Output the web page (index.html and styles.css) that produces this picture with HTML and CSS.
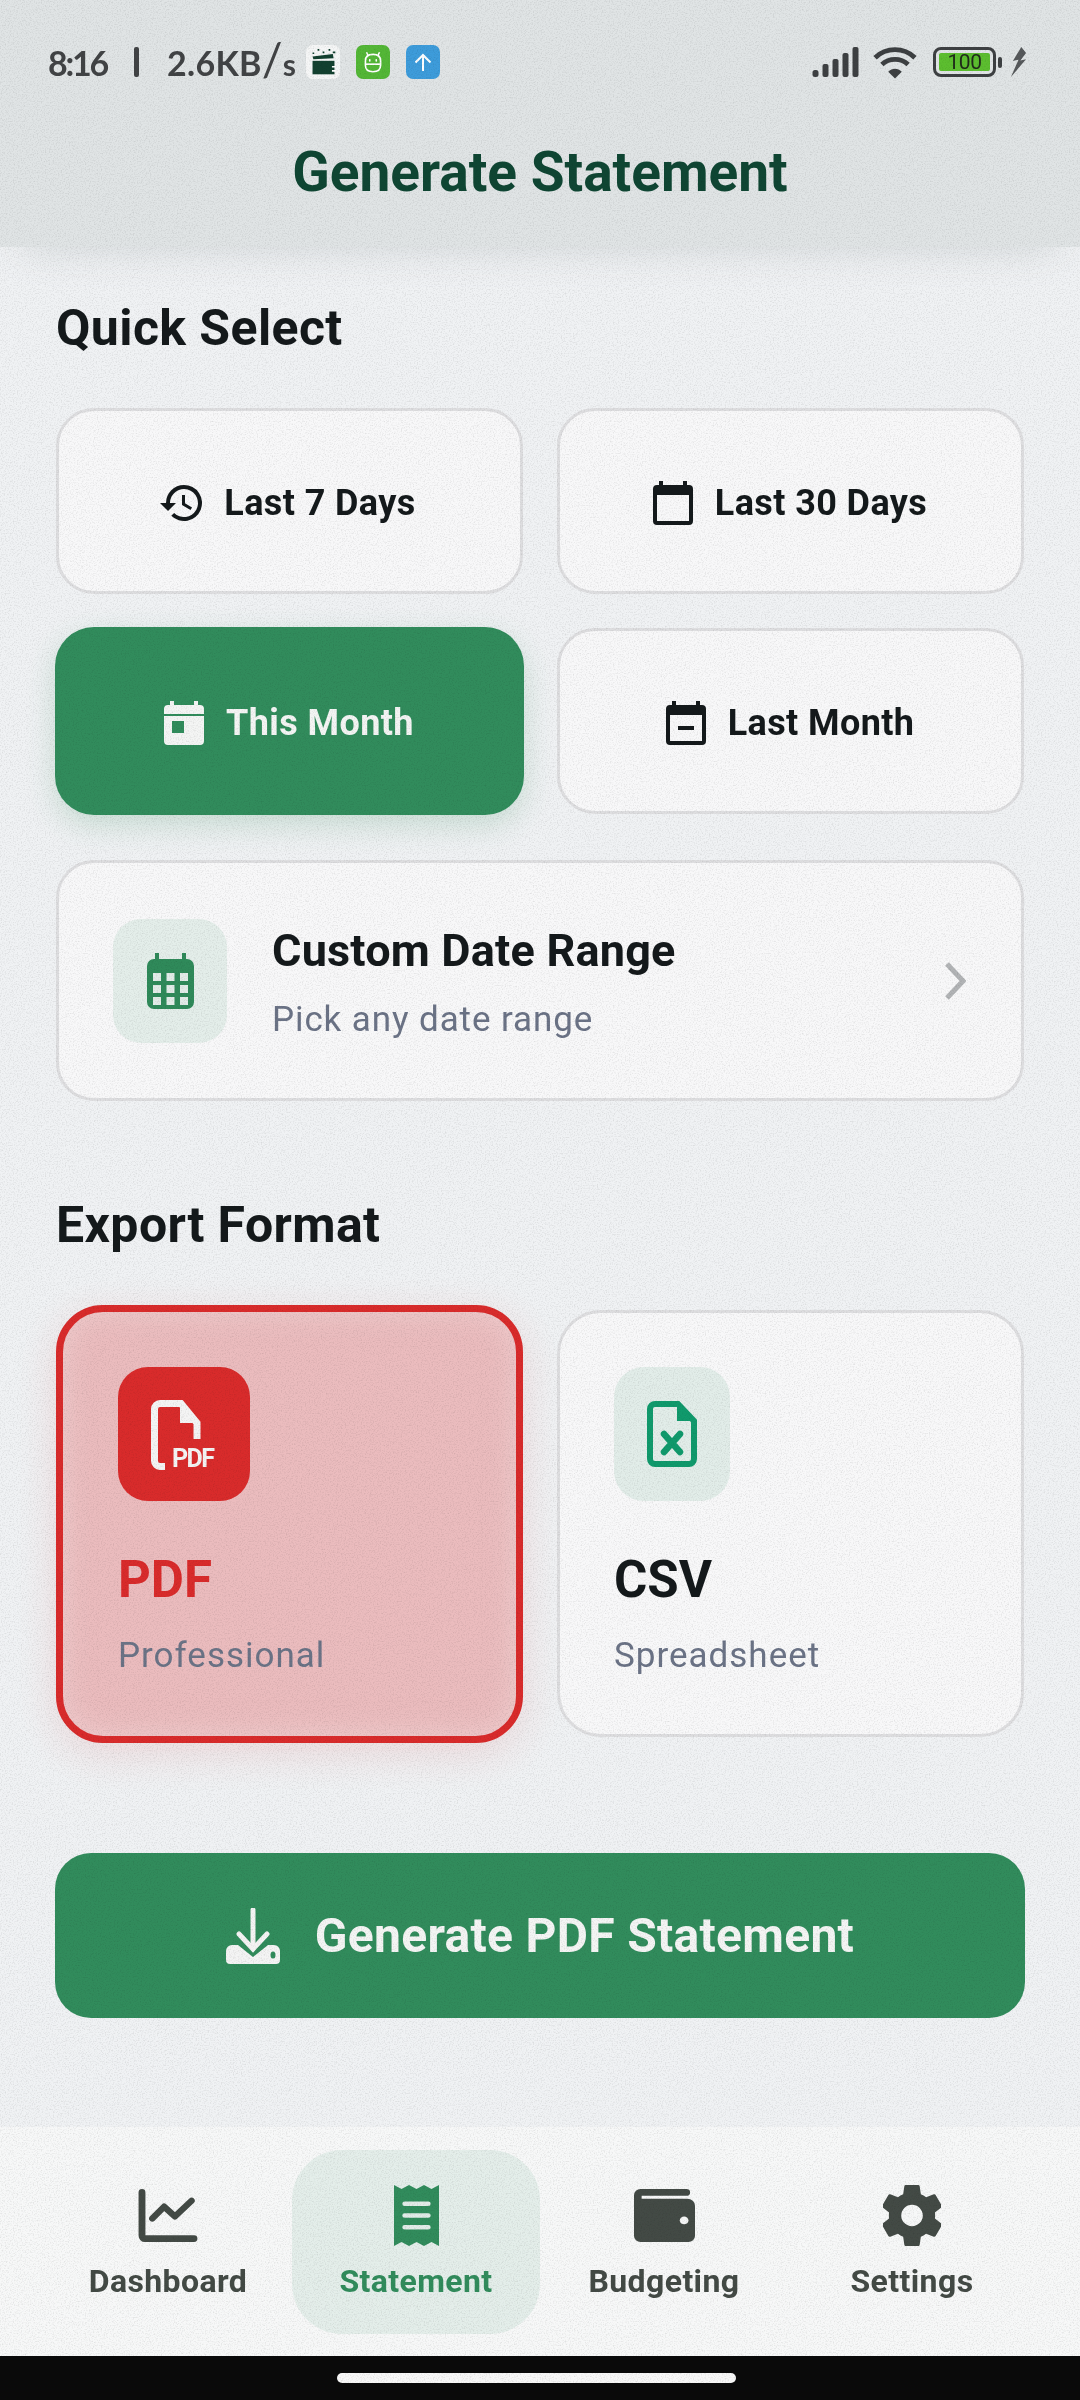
FILE: index.html
```html
<!DOCTYPE html>
<html lang="en">
<head>
    <meta charset="UTF-8">
    <meta name="viewport" content="width=device-width, initial-scale=1.0">
    <title>Generate Statement</title>
    <link rel="stylesheet" href="styles.css">
</head>
<body>
    <div class="screen">
        <header class="top">
            <div class="status">
                <div class="status-left">
                    <span class="clock">8:16</span>
                    <span class="sep"></span>
                    <span class="speed">2.6KB<i class="slash">/</i><small>s</small></span>
                    <span class="app app-white">
                        <svg viewBox="0 0 32 34" width="27" height="29"><path d="M3 5h2v2H3zM9 1h2v2H9zM15 4h2v2h-2zM22 1h2v2h-2zM27 4h3v2h-3z" fill="#12402f"/><path d="M3 10l24-3 1 5-24 1z" fill="#12402f"/><path d="M3 15h26v16H3z" fill="#12402f"/><path d="M26 21h4v2h-4zM26 26h4v2h-4z" fill="#fff"/></svg>
                    </span>
                    <span class="app app-green">
                        <svg viewBox="0 0 24 24" width="26" height="26" fill="none" stroke="#fff" stroke-width="1.5"><path d="M6 3l1.5 3M18 3l-1.500 3"/><path d="M5 11c0-4 3-6 7-6s7 2 7 6v4c0 4-3 6-7 6s-7-2-7-6z"/><path d="M5 14h14"/><path d="M9 10v1M15 10v1" stroke-linecap="round"/></svg>
                    </span>
                    <span class="app app-blue">
                        <svg viewBox="0 0 24 24" width="24" height="24" fill="none" stroke="#fff" stroke-width="2"><path d="M12 21V5M4.5 12.5L12 5l7.5 7.5"/></svg>
                    </span>
                </div>
                <div class="status-right">
                    <svg class="signal" viewBox="0 0 46 32" width="47" height="32" fill="#3d4042">
                        <rect x="0" y="24" width="6" height="7" rx="2.5"/>
                        <rect x="10" y="18" width="6" height="13" rx="2"/>
                        <rect x="20" y="13" width="6" height="18" rx="2"/>
                        <rect x="30" y="7" width="6" height="24" rx="2"/>
                        <rect x="40" y="1" width="6" height="30" rx="2"/>
                    </svg>
                    <svg class="wifi" viewBox="0 0 46 36" width="46" height="35" fill="none" stroke="#3d4042" stroke-width="5">
                        <path d="M2.500 13C14 2 32 2 43.500 13"/>
                        <path d="M9.500 20C17 13 29 13 36.500 20"/>
                        <path d="M23 34.500L16 27.500C20 23.500 26 23.500 30 27.500z" fill="#3d4042" stroke="none"/>
                    </svg>
                    <div class="battery">
                        <div class="battery-body"><span class="battery-level">100</span></div>
                        <span class="battery-tip"></span>
                    </div>
                    <svg class="bolt" viewBox="0 0 18 32" width="17" height="32" fill="#56595b"><path d="M12 0L3 15l6-1.500L1 32 17 13l-6 1.500 6-8z"/></svg>
                </div>
            </div>
            <h1 class="title">Generate Statement</h1>
        </header>

        <main class="content">
            <h2 class="section-title">Quick Select</h2>
            <div class="quick-grid">
                <button class="quick">
                    <svg class="quick-icon" viewBox="0 0 24 24"><path d="M13 3a9 9 0 0 0-9 9H1l3.900 3.900.1.100L9 12H6a7 7 0 1 1 2.050 4.950L6.640 18.360A9 9 0 1 0 13 3zm-1 5v5l4.250 2.520.77-1.280-3.520-2.090V8z"/></svg>
                    Last 7 Days
                </button>
                <button class="quick">
                    <svg class="quick-icon" viewBox="0 0 24 24"><path d="M20 3h-1V1h-2v2H7V1H5v2H4a2 2 0 0 0-2 2v16a2 2 0 0 0 2 2h16a2 2 0 0 0 2-2V5a2 2 0 0 0-2-2zm0 18H4V8h16z"/></svg>
                    Last 30 Days
                </button>
                <button class="quick quick-on">
                    <svg class="quick-icon" viewBox="0 0 24 24"><path d="M20 3h-1V1h-2v2H7V1H5v2H4a2 2 0 0 0-2 2v16a2 2 0 0 0 2 2h16a2 2 0 0 0 2-2V5a2 2 0 0 0-2-2z"/><path d="M2 7.500h20v1H2zM6 11h6v6H6z" fill="#318c5c"/></svg>
                    This Month
                </button>
                <button class="quick">
                    <svg class="quick-icon" viewBox="0 0 24 24"><path d="M20 3h-1V1h-2v2H7V1H5v2H4a2 2 0 0 0-2 2v16a2 2 0 0 0 2 2h16a2 2 0 0 0 2-2V5a2 2 0 0 0-2-2zm0 18H4V8h16zM8 13.500h8v2H8z"/></svg>
                    Last Month
                </button>
            </div>

            <div class="custom">
                <div class="custom-icon">
                    <svg viewBox="0 0 47 56" width="47" height="56" fill="#2f8a5a">
                        <path d="M8 0h4v6h23V0h4v6h1a7 7 0 0 1 7 7v36a7 7 0 0 1-7 7H7a7 7 0 0 1-7-7V13a7 7 0 0 1 7-7h1z"/>
                        <path d="M6 20h8v8H6zM19.500 20h8v8h-8zM33 20h8v8h-8zM6 32h8v8H6zM19.500 32h8v8h-8zM33 32h8v8h-8zM6 44h8v8H6zM19.500 44h8v8h-8zM33 44h8v8h-8z" fill="#e2ece8"/>
                    </svg>
                </div>
                <div class="custom-text">
                    <div class="custom-name">Custom Date Range</div>
                    <div class="custom-sub">Pick any date range</div>
                </div>
                <svg class="chev" viewBox="0 0 22 38" width="22" height="38" fill="none" stroke="#b2b4b6" stroke-width="5"><path d="M3 2l16 17L3 36"/></svg>
            </div>

            <h2 class="section-title export-title">Export Format</h2>
            <div class="format-grid">
                <div class="format format-on">
                    <div class="format-icon icon-red">
                        <svg class="pdf-svg" viewBox="0 0 72 78" width="72" height="78" fill="none" stroke="#f4f4f4" stroke-width="7">
                            <path d="M46 39V23L30 3.500H9A5.500 5.500 0 0 0 3.500 9v52A5.500 5.500 0 0 0 9 66.500h5"/>
                            <path d="M29 2l19 21H29z" fill="#f4f4f4" stroke="none"/>
                            <text class="pdf-mini" x="21" y="67" textLength="43" lengthAdjust="spacing">PDF</text>
                        </svg>
                    </div>
                    <div class="format-name name-red">PDF</div>
                    <div class="format-sub">Professional</div>
                </div>
                <div class="format">
                    <div class="format-icon icon-mint">
                        <svg viewBox="0 0 50 66" width="50" height="66">
                            <path d="M3 8a5 5 0 0 1 5-5h23l16 17v38a5 5 0 0 1-5 5H8a5 5 0 0 1-5-5z" fill="none" stroke="#109a6c" stroke-width="6"/>
                            <path d="M30 2l17 18H30z" fill="#109a6c"/>
                            <path d="M17 33l16 18M33 33L17 51" stroke="#109a6c" stroke-width="6.500" stroke-linecap="round"/>
                        </svg>
                    </div>
                    <div class="format-name">CSV</div>
                    <div class="format-sub">Spreadsheet</div>
                </div>
            </div>

            <button class="generate">
                <svg viewBox="0 0 54 56" width="54" height="56" fill="#f4f4f4">
                    <path d="M27 2v38" stroke="#f4f4f4" stroke-width="5" stroke-linecap="round"/>
                    <path d="M13 26l14 15 14-15" fill="none" stroke="#f4f4f4" stroke-width="5" stroke-linecap="round"/>
                    <path d="M6 37h6l15 12 15-12h6a6 6 0 0 1 6 6v9a4 4 0 0 1-4 4H4a4 4 0 0 1-4-4v-9a6 6 0 0 1 6-6z"/>
                    <ellipse cx="47" cy="47" rx="2.500" ry="3.500" fill="#318c5c"/>
                </svg>
                Generate PDF Statement
            </button>
        </main>

        <nav class="tabs">
            <div class="tab">
                <div class="tab-icon">
                    <svg viewBox="0 0 60 54" width="60" height="53" fill="none" stroke="#434a45" stroke-width="7" stroke-linecap="round" stroke-linejoin="round"><path d="M3.500 3.500v44a3 3 0 0 0 3 3h50"/><path d="M14 30l12-12 11 10 17-16" stroke-width="6.500"/></svg>
                </div>
                <span>Dashboard</span>
            </div>
            <div class="tab tab-on">
                <div class="tab-icon">
                    <svg viewBox="0 0 42 60" width="45" height="61" preserveAspectRatio="none"><path d="M0 0l7 4 7-4 7 4 7-4 7 4 7-4v60l-7-4-7 4-7-4-7 4-7-4-7 4z" fill="#318c5c"/><path d="M10 18.500h22M10 30h22M10 41.500h22" stroke="#e2ece8" stroke-width="4.500" stroke-linecap="round"/></svg>
                </div>
                <span>Statement</span>
            </div>
            <div class="tab">
                <div class="tab-icon">
                    <svg viewBox="0 0 56 54" width="61" height="53" preserveAspectRatio="none"><path d="M6 0h42a3.500 3.500 0 0 1 0 7H7v3h42a7 7 0 0 1 7 7v31a6 6 0 0 1-6 6H6a6 6 0 0 1-6-6V6a6 6 0 0 1 6-6z" fill="#434a45"/><circle cx="46" cy="32" r="4" fill="#f4f5f5"/></svg>
                </div>
                <span>Budgeting</span>
            </div>
            <div class="tab">
                <div class="tab-icon">
                    <svg viewBox="2.600 2 18.800 20" width="58" height="61" preserveAspectRatio="none" fill="#434a45"><path d="M19.430 12.980c.04-.320.070-.650.070-.980s-.030-.660-.070-.980l2.110-1.650a.5.500 0 0 0 .120-.640l-2-3.460a.5.500 0 0 0-.610-.220l-2.490 1a7.300 7.300 0 0 0-1.690-.980l-.380-2.650A.49.490 0 0 0 14 2h-4a.49.490 0 0 0-.490.420l-.380 2.650c-.610.250-1.170.590-1.690.980l-2.490-1a.5.500 0 0 0-.610.220l-2 3.460a.49.490 0 0 0 .120.640l2.110 1.650c-.040.320-.070.650-.070.980s.030.660.070.980l-2.110 1.650a.5.500 0 0 0-.120.640l2 3.460c.120.220.390.300.610.220l2.490-1c.520.400 1.080.730 1.690.980l.380 2.650c.030.240.240.420.490.420h4c.250 0 .460-.180.490-.420l.380-2.650c.610-.250 1.170-.590 1.690-.980l2.490 1c.230.090.490 0 .610-.220l2-3.460a.5.500 0 0 0-.120-.640zM12 15.500a3.500 3.500 0 1 1 0-7 3.500 3.500 0 0 1 0 7z"/></svg>
                </div>
                <span>Settings</span>
            </div>
        </nav>

        <div class="navbar"><span class="home-pill"></span></div>
    </div>

    <!-- film grain over the whole shot -->
    <svg class="grain" width="1080" height="2400">
        <filter id="noise" x="0" y="0" width="100%" height="100%" color-interpolation-filters="sRGB">
            <feTurbulence type="fractalNoise" baseFrequency="0.75" numOctaves="2"/>
            <feColorMatrix type="matrix" values="0.22 0 0 0 0.88  0.22 0 0 0 0.88  0.22 0 0 0 0.88  0 0 0 0 1"/>
        </filter>
        <rect width="1080" height="2400" filter="url(#noise)"/>
    </svg>
</body>
</html>
```

FILE: styles.css
```css
* {
    box-sizing: border-box;
}
html, body {
    margin: 0;
    padding: 0;
}
body {
    width: 1080px;
    height: 2400px;
    overflow: hidden;
    font-family: Roboto, "Noto Sans", sans-serif;
    background-color: #f0f2f4;
    color: #14191b;
}
.screen {
    display: flex;
    flex-direction: column;
    height: 2400px;
}
.grain {
    position: absolute;
    left: 0;
    top: 0;
    mix-blend-mode: multiply;
    pointer-events: none;
}

/* header + status bar */
.top {
    position: relative;
    height: 247px;
    background-color: #e0e4e5;
    flex: none;
    box-shadow: 0 24px 38px -24px rgb(208, 213, 215);
}
.status {
    display: flex;
    justify-content: space-between;
    align-items: center;
    height: 93px;
    padding: 31px 53px 0 48px;
}
.status-left, .status-right {
    display: flex;
    align-items: center;
}
.clock, .speed {
    font-family: "Lato", sans-serif;
    font-size: 34px;
    font-weight: 700;
    color: #414345;
}
.clock {
    width: 60px;
    letter-spacing: -2.2px;
    white-space: nowrap;
}
.sep {
    width: 5px;
    height: 30px;
    background-color: #414345;
    border-radius: 2px;
    margin: 0 28px 0 26px;
}
.speed {
    width: 129px;
    white-space: nowrap;
    letter-spacing: 0.3px;
}
.slash {
    font-style: normal;
    font-size: 46px;
    line-height: 0;
    font-weight: 400;
}
.speed small {
    font-size: 30px;
}
.app {
    display: flex;
    align-items: center;
    justify-content: center;
    width: 34px;
    height: 34px;
    border-radius: 7px;
    margin-right: 16px;
}
.app-white {
    margin-left: 10px;
    background-color: #f5f6f6;
}
.app-green {
    background-color: #53b736;
}
.app-blue {
    background-color: #3d9cdb;
    margin-right: 0;
}
.signal {
    margin-right: 13px;
}
.wifi {
    margin-right: 15px;
}
.battery {
    display: flex;
    align-items: center;
    margin-right: 8px;
}
.battery-body {
    width: 63px;
    height: 30px;
    border: 3px solid #3d4042;
    border-radius: 8px;
    padding: 3px;
}
.battery-level {
    display: block;
    height: 18px;
    background-color: #5cbe2f;
    border-radius: 2px;
    font-size: 21px;
    line-height: 18px;
    letter-spacing: -0.5px;
    text-align: center;
    color: #1f2a1a;
}
.battery-tip {
    width: 4px;
    height: 11px;
    margin-left: 2px;
    background-color: #3d4042;
    border-radius: 2px;
}
.title {
    margin: 48px 0 0;
    text-align: center;
    font-size: 55px;
    line-height: 62px;
    font-weight: 700;
    color: #0f4633;
}

/* main */
.content {
    flex: 1;
    padding: 0 56px;
}
.section-title {
    margin: 0;
    font-size: 50px;
    line-height: 56px;
    font-weight: 700;
    letter-spacing: 0.4px;
    padding-top: 53px;
    height: 161px;
}
.export-title {
    height: 209px;
    padding-top: 96px;
}
.quick-grid {
    display: grid;
    grid-template-columns: 467px 467px;
    grid-auto-rows: 186px;
    gap: 34px;
}
.quick {
    display: flex;
    align-items: center;
    justify-content: center;
    gap: 18px;
    padding: 3px 5px 0 0;
    font-family: inherit;
    font-size: 36px;
    font-weight: 700;
    letter-spacing: 0.4px;
    color: #14191b;
    background-color: #f8f8f9;
    border: 3px solid #dedee0;
    border-radius: 38px;
}
.quick-icon {
    width: 48px;
    height: 48px;
    fill: currentColor;
    flex: none;
}
.quick-on {
    background-color: #318c5c;
    border-color: #318c5c;
    color: #f4f5f4;
    box-shadow: 0 0 0 1px #318c5c, 0 10px 30px rgba(49, 140, 92, 0.22);
}
.custom {
    display: flex;
    align-items: center;
    height: 241px;
    margin-top: 46px;
    padding: 0 55px 0 54px;
    background-color: #f8f8f9;
    border: 3px solid #dedee0;
    border-radius: 38px;
}
.custom-icon {
    display: flex;
    align-items: center;
    justify-content: center;
    width: 114px;
    height: 124px;
    border-radius: 28px;
    background-color: #e4eeea;
    flex: none;
}
.custom-text {
    flex: 1;
    margin-left: 45px;
    padding-top: 4px;
}
.custom-name {
    font-size: 45px;
    line-height: 52px;
    font-weight: 700;
    letter-spacing: 0.2px;
}
.custom-sub {
    margin-top: 22px;
    font-size: 35px;
    line-height: 42px;
    letter-spacing: 0.9px;
    color: #6b7386;
}
.format-grid {
    display: grid;
    grid-template-columns: 467px 467px;
    gap: 34px;
}
.format {
    height: 427px;
    padding: 54px 54px 0;
    background-color: #f8f8f9;
    border: 3px solid #dedee0;
    border-radius: 44px;
}
.format-on {
    height: 438px;
    margin-top: -5px;
    padding: 55px 55px 0;
    border: 7px solid #d92b2b;
    border-radius: 47px;
    background-color: #ebbcbe;
    box-shadow: 0 10px 40px rgba(217, 43, 43, 0.12), inset 0 0 30px rgba(245, 225, 225, 0.5);
}
.format-icon {
    display: flex;
    align-items: center;
    justify-content: center;
    width: 116px;
    height: 134px;
    border-radius: 30px;
    background-color: #e2ede9;
}
.icon-red {
    width: 132px;
    background-color: #d92b2b;
}
.pdf-svg {
    margin: 10px -6px 0 0;
}
.pdf-mini {
    font-family: Roboto, sans-serif;
    font-size: 25px;
    font-weight: 700;
    fill: #f4f4f4;
    stroke: none;
}
.format-name {
    margin-top: 50px;
    font-size: 51px;
    line-height: 58px;
    font-weight: 700;
}
.name-red {
    color: #d92b2b;
}
.format-sub {
    margin-top: 26px;
    font-size: 35px;
    line-height: 42px;
    letter-spacing: 1px;
    color: #6b7386;
}
.generate {
    display: flex;
    align-items: center;
    justify-content: center;
    gap: 35px;
    width: 970px;
    height: 165px;
    margin: 110px 0 0 -1px;
    padding: 0;
    font-family: inherit;
    font-size: 48px;
    font-weight: 700;
    letter-spacing: 0.3px;
    color: #f4f5f4;
    background-color: #318c5c;
    border: none;
    border-radius: 36px;
}

/* bottom nav */
.tabs {
    display: flex;
    align-items: center;
    flex: none;
    height: 229px;
    padding: 0 44px;
    background-color: #f7f8f8;
}
.tab {
    display: flex;
    flex-direction: column;
    align-items: center;
    width: 248px;
    height: 184px;
    margin-top: 1px;
    padding-top: 34px;
    font-size: 32px;
    font-weight: 700;
    letter-spacing: 0.4px;
    color: #434a45;
}
.tab-icon {
    display: flex;
    align-items: center;
    height: 62px;
}
.tab span {
    margin-top: 15px;
    line-height: 40px;
}
.tab-on {
    color: #318c5c;
    background-color: #e4eeea;
    border-radius: 50px;
}
.navbar {
    display: flex;
    justify-content: center;
    flex: none;
    height: 44px;
    padding-top: 17px;
    background-color: #0a0a0a;
}
.home-pill {
    width: 399px;
    height: 10px;
    margin-right: 7px;
    border-radius: 5px;
    background-color: #f8f8f8;
}
```
